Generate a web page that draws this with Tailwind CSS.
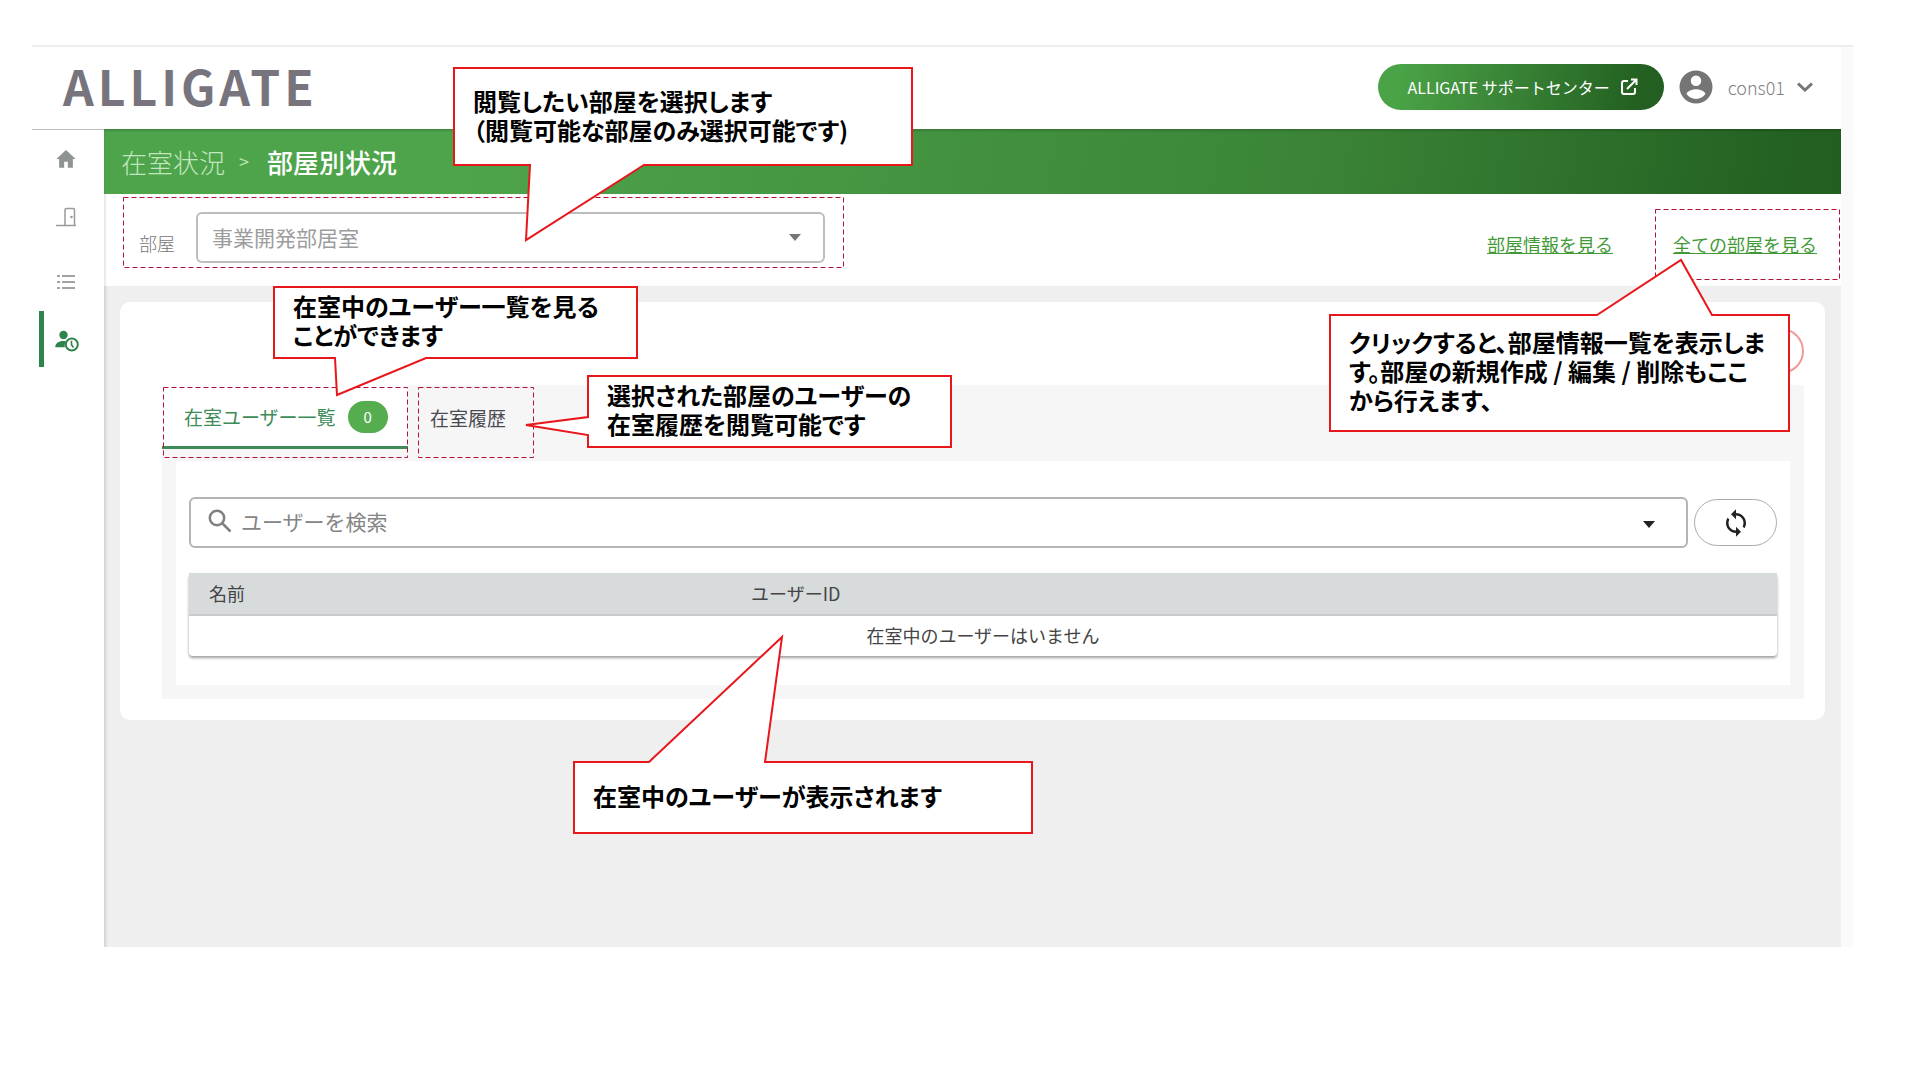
<!DOCTYPE html>
<html lang="ja">
<head>
<meta charset="utf-8">
<title>ALLIGATE 部屋別状況</title>
<script src="https://cdn.jsdelivr.net/npm/@tailwindcss/browser@4"></script>
</head>
<body class="bg-white pt-[45px] pb-10 pl-8 pr-[67px] font-['Noto_Sans_CJK_JP',sans-serif] text-[#444]">
<div class="relative border-t-2 border-[#eeeeee] pr-3 bg-[#fafafa]">

  <!-- Header -->
  <header class="flex h-[82px] items-center bg-white pb-[2px] pl-[31px] pr-7">
    <a href="#" class="pb-1 text-[48px] leading-none font-bold tracking-[4px] text-[#77747d]">ALLIGATE</a>
    <div class="ml-auto flex items-center">
      <a href="#" class="flex h-[46px] items-center gap-[10px] rounded-full bg-linear-[100deg,#4aa346_8%,#3d8a3a_38%,#225f20_92%] pl-[30px] pr-[26px] text-[16px] text-white">
        <span>ALLIGATE サポートセンター</span>
        <svg class="size-[18px]" viewBox="0 0 18 18" fill="none" stroke="currentColor" stroke-width="2"><path d="M8 3H4Q2 3 2 5V14Q2 16 4 16H13Q15 16 15 14V10M11 1.500H16.500V7M16 2L7 11"/></svg>
      </a>
      <button class="ml-[14px] flex items-center text-[18px] font-light text-[#808080]">
        <svg class="size-9" viewBox="0 0 24 24" fill="#757575"><path fill-rule="evenodd" d="M12 1a11 11 0 1 0 0 22 11 11 0 0 0 0-22Zm0 3.300a3.500 3.500 0 1 1 0 7 3.500 3.500 0 0 1 0-7ZM12 20c-2.800 0-5-1.300-6.300-3.300.1-2 4.200-3.200 6.300-3.200s6.200 1.200 6.300 3.200C17 18.700 14.800 20 12 20Z"/></svg>
        <span class="ml-[14px]">cons01</span>
        <svg class="ml-3 h-[10px] w-4" viewBox="0 0 16 10" fill="none" stroke="#757575" stroke-width="3"><path d="M1 1.500L8 8L15 1.500"/></svg>
      </button>
    </div>
  </header>

  <div class="flex">
    <!-- Side navigation -->
    <nav class="w-[72px] shrink-0 border-t border-[#bdbdbd] bg-white text-[#9e9e9e]">
      <a href="#" aria-label="ホーム" class="flex h-[58px] items-center justify-center pr-1">
        <svg class="size-[22px]" viewBox="0 0 24 24" fill="#8f9492"><path d="M10 21.500V15h4v6.500h5.500V12H22.500L12 2.200 1.500 12H4.500v9.500Z"/></svg>
      </a>
      <a href="#" aria-label="部屋" class="flex h-[58px] items-center justify-center pr-1">
        <svg class="size-[22px]" viewBox="0 0 22 22" fill="none" stroke="#9a9a9a" stroke-width="1.500"><path d="M1 19.500H21M10 19V4Q10 2.500 11.500 2.500H18Q19.500 2.500 19.500 4V19"/><circle cx="16.500" cy="11" r=".6" fill="#9a9a9a"/></svg>
      </a>
      <a href="#" aria-label="一覧" class="mt-[7px] flex h-[58px] items-center justify-center pr-1">
        <svg class="size-5" viewBox="0 0 20 20" fill="none" stroke="#a3a3a3" stroke-width="2"><path d="M1 4H4M6 4H19M1 10H4M6 10H19M1 16H4M6 16H19"/></svg>
      </a>
      <a href="#" aria-label="在室状況" aria-current="page" class="ml-[7px] flex h-14 items-center border-l-[5px] border-[#2f844b] pl-[11px] pt-1">
        <svg class="h-6 w-6" viewBox="0 0 24 24" fill="#2f844b"><circle cx="8.500" cy="6" r="4.200"/><path d="M.3 18.200c0-4 3.500-6.200 7.700-6.200 1 0 2 .1 2.800.4a7 7 0 0 0-1 5.800Z"/><circle cx="16.800" cy="15.500" r="6" fill="#fff" stroke="#2f844b" stroke-width="2"/><path d="M16.500 11.800V15.800L18.500 18.500" fill="none" stroke="#2f844b" stroke-width="1.600"/></svg>
      </a>
    </nav>

    <div class="min-w-0 flex-1">
      <!-- Breadcrumb -->
      <div class="flex h-[65px] items-center bg-linear-[100deg,#4ea44b_20%,#3b8437_70%,#225f21_98%] pl-[17px] text-[26px] shadow-[inset_0_2px_2px_rgba(0,0,0,0.15)]">
        <a href="#" class="font-light text-[#c2e6be]">在室状況</a>
        <span class="ml-[14px] w-7 text-[18px] text-[#b9e3b5]">&gt;</span>
        <h1 class="font-medium text-white">部屋別状況</h1>
      </div>

      <!-- Room filter -->
      <div class="flex h-[92px] bg-white pl-[19px] pr-px shadow-[inset_3px_0_3px_-2px_rgba(0,0,0,0.15)]">
        <div class="relative mt-[3px] flex h-[70px] w-[720px] items-center pl-4 pr-[18px] pt-[11px]">
          <label for="room" class="mt-3 w-[57px] text-[18px] font-light text-[#757575]">部屋</label>
          <div class="relative flex-1">
            <select id="room" class="block h-[51px] w-full appearance-none rounded-[6px] border-2 border-[#bdbdbd] bg-white pl-[14px] text-[21px] text-[#9c9c9c]"><option>事業開発部居室</option></select>
            <svg class="pointer-events-none absolute top-[22px] right-6 h-[7px] w-3" viewBox="0 0 12 7" fill="#757575"><path d="M0 0H12L6 7Z"/></svg>
          </div>
          <svg class="pointer-events-none absolute inset-0 size-full overflow-visible" fill="none" stroke="#b80f38"><rect x=".5" y=".5" width="100%" height="100%" stroke-dasharray="5 3"/></svg>
        </div>
        <div class="ml-auto mt-[15px] flex h-[70px] items-center text-[18px] text-[#429a37]">
          <a href="#" class="mr-[43px] underline">部屋情報を見る</a>
          <div class="relative flex h-full items-center pl-[17px] pr-[23px]">
            <a href="#" class="underline">全ての部屋を見る</a>
            <svg class="pointer-events-none absolute inset-0 size-full overflow-visible" fill="none" stroke="#b80f38"><rect x="-.5" y=".5" width="100%" height="100%" stroke-dasharray="5 3"/></svg>
          </div>
        </div>
      </div>

      <!-- Content -->
      <main class="min-h-[661px] bg-[#efefef] p-4 shadow-[inset_4px_0_3px_-2px_rgba(0,0,0,0.12)]">
        <section class="rounded-[10px] bg-white pb-[21px] pl-[42px] pr-[21px]">
          <div class="flex h-[83px] justify-end pt-[26px]">
            <button aria-label="削除" class="h-[46px] w-28 rounded-full border-2 border-[#ef9a9a]"></button>
          </div>
          <div class="bg-[#f6f6f6] px-[14px] pb-[14px]">
            <div role="tablist" class="-ml-[14px] flex h-[76px] gap-[10px] text-[19px]">
              <div class="relative h-[73px] w-[246px]">
                <button role="tab" aria-selected="true" class="flex h-16 w-full items-center border-b-[3px] border-[#3d8c57] bg-white pl-[22px] pt-[3px] text-[#3d8c57]">
                  <span>在室ユーザー一覧</span>
                  <span class="ml-3 flex h-8 w-10 items-center justify-center rounded-full bg-[#55ad50] text-[15px] text-white">0</span>
                </button>
                <svg class="pointer-events-none absolute left-px top-[2px] h-[70px] w-[244px] overflow-visible" fill="none" stroke="#b80f38"><rect x=".5" y=".5" width="100%" height="100%" stroke-dasharray="5 3"/></svg>
              </div>
              <div class="relative h-[73px] w-[115px]">
                <button role="tab" aria-selected="false" class="flex h-16 w-full items-center pl-3 pt-[2px] text-[#4a4a50]">在室履歴</button>
                <svg class="pointer-events-none absolute inset-x-0 top-[2px] h-[70px] w-full overflow-visible" fill="none" stroke="#b80f38"><rect x=".5" y=".5" width="100%" height="100%" stroke-dasharray="5 3"/></svg>
              </div>
            </div>

            <div class="bg-white px-[13px] pb-[29px] pt-[36px]">
              <div class="flex items-center gap-[6px]">
                <div class="relative flex-1">
                  <svg class="pointer-events-none absolute left-[19px] top-[12px] size-6" viewBox="0 0 24 24" fill="none" stroke="#808080" stroke-width="2.500"><circle cx="9" cy="9" r="7.200"/><path d="M14 14L22.500 22.500"/></svg>
                  <input type="text" aria-label="ユーザーを検索" placeholder="ユーザーを検索" class="block h-[51px] w-full rounded-[6px] border-2 border-[#b4b4b4] bg-white pb-1 pl-[50px] text-[21px] placeholder:text-[#858585]">
                  <svg class="pointer-events-none absolute right-[33px] top-[24px] h-[7px] w-3" viewBox="0 0 12 7" fill="#222"><path d="M0 0H12L6 7Z"/></svg>
                </div>
                <button aria-label="更新" class="flex h-[47px] w-[83px] items-center justify-center rounded-full border border-[#ababab] bg-white">
                  <svg class="size-[30px]" viewBox="0 0 24 24" fill="#222"><path d="M12 4V1L8 5l4 4V6c3.310 0 6 2.690 6 6 0 1.010-.25 1.970-.7 2.800l1.460 1.460C19.540 15.030 20 13.570 20 12c0-4.420-3.580-8-8-8Zm0 14c-3.310 0-6-2.690-6-6 0-1.010.25-1.970.7-2.800L5.240 7.740C4.460 8.970 4 10.430 4 12c0 4.420 3.580 8 8 8v3l4-4-4-4v3Z"/></svg>
                </button>
              </div>
              <table class="mt-[25px] w-full table-fixed rounded-[4px] text-left text-[18px] shadow-[0_2px_3px_rgba(0,0,0,0.38)]">
                <thead class="bg-[#d7dbdc]">
                  <tr class="h-[42px] border-b-2 border-[#c8cccb]">
                    <th class="w-[542px] pl-5 font-normal">名前</th>
                    <th class="pl-5 font-normal">ユーザーID</th>
                  </tr>
                </thead>
                <tbody>
                  <tr class="h-[41px]"><td colspan="2" class="pb-[2px] text-center">在室中のユーザーはいません</td></tr>
                </tbody>
              </table>
            </div>
          </div>
        </section>
      </main>
    </div>
  </div>

  <!-- Callouts, laid over the screen -->
  <div class="text-[24px] leading-[29px] font-bold text-black [font-feature-settings:'palt']">
    <div class="absolute left-[421px] top-[20px] flex h-[99px] w-[460px] items-center pb-[3px] pl-5">
      <svg class="absolute inset-0 size-full overflow-visible" viewBox="0 0 460 99" fill="#fff" stroke="#e8171b" stroke-width="2"><path d="M1 1H459V98H191L73 173L77 98H1Z"/></svg>
      <p class="relative">閲覧したい部屋を選択します<br>（閲覧可能な部屋のみ選択可能です)</p>
    </div>
    <div class="absolute left-[241px] top-[239px] flex h-[73px] w-[365px] items-center pb-[5px] pl-5">
      <svg class="absolute inset-0 size-full overflow-visible" viewBox="0 0 365 73" fill="#fff" stroke="#e8171b" stroke-width="2"><path d="M1 1H364V72H153L64 109L62 72H1Z"/></svg>
      <p class="relative">在室中のユーザー一覧を見る<br>ことができます</p>
    </div>
    <div class="absolute left-[555px] top-[328px] flex h-[73px] w-[365px] items-center pb-[5px] pl-5">
      <svg class="absolute inset-0 size-full overflow-visible" viewBox="0 0 365 73" fill="#fff" stroke="#e8171b" stroke-width="2"><path d="M1 1H364V72H1V60L-61 50L1 42Z"/></svg>
      <p class="relative">選択された部屋のユーザーの<br>在室履歴を閲覧可能です</p>
    </div>
    <div class="absolute right-[63px] top-[267px] flex h-[118px] w-[461px] items-center pb-[5px] pl-5">
      <svg class="absolute inset-0 size-full overflow-visible" viewBox="0 0 461 118" fill="#fff" stroke="#e8171b" stroke-width="2"><path d="M1 1H268L352 -54L383 1H460V117H1Z"/></svg>
      <p class="relative">クリックすると、部屋情報一覧を表示しま<br>す。部屋の新規作成 / 編集 / 削除もここ<br>から行えます、</p>
    </div>
    <div class="absolute left-[541px] top-[714px] flex h-[73px] w-[460px] items-center pb-[5px] pl-5">
      <svg class="absolute inset-0 size-full overflow-visible" viewBox="0 0 460 73" fill="#fff" stroke="#e8171b" stroke-width="2"><path d="M1 1H76L209 -124L192 1H459V72H1Z"/></svg>
      <p class="relative">在室中のユーザーが表示されます</p>
    </div>
  </div>
</div>
</body>
</html>
